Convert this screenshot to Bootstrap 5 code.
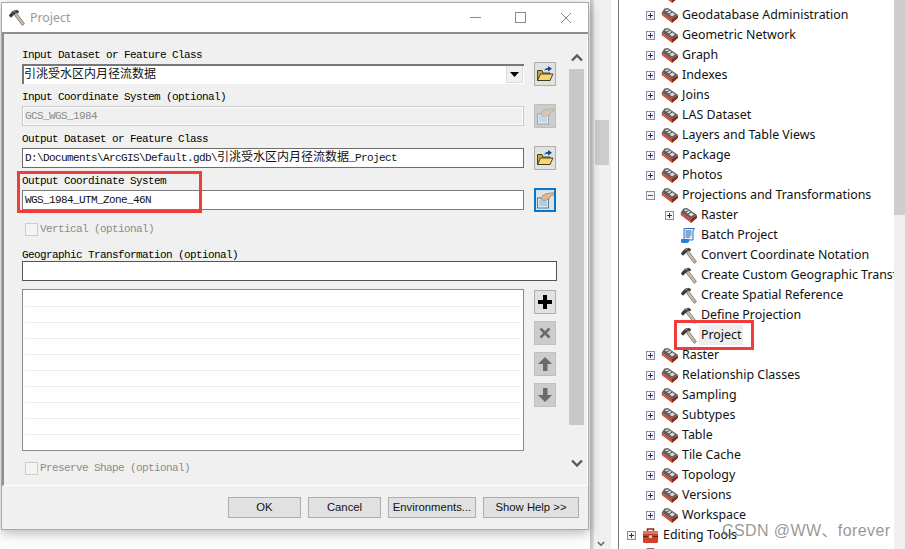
<!DOCTYPE html>
<html lang="zh">
<head>
<meta charset="utf-8">
<title>Project</title>
<link href="https://cdn.jsdelivr.net/npm/bootstrap@5.3.0/dist/css/bootstrap.min.css" rel="stylesheet">
<style>
html,body{margin:0;height:549px;overflow:hidden;background:#fff}
.stage{position:relative;width:905px;height:549px;overflow:hidden;background:#fff}
.dlg{position:absolute;left:1px;top:2px;width:588px;height:528px;background:#f0f0f0;border:1px solid #a9a9a9;box-shadow:0 3px 12px rgba(0,0,0,.3);z-index:2}
.ttl{height:31px;background:#fff;padding-left:6px;border-bottom:2px solid #8f8f8f;font:12.4px "Noto Sans",sans-serif;color:#9a9a9a}
.ttl-t{margin-left:5px}
.wbtns{margin-left:auto;width:118px;padding-right:16px}
.dlg-body{height:452px;border-left:2px solid #8f8f8f;border-right:1px solid #fff;border-bottom:1px solid #fff;padding:0 0 0 18px;position:relative}
.form-col{width:536px;padding-top:15px}
.lbl{font:11px/13px "Liberation Mono","Noto Sans CJK SC",monospace;letter-spacing:-.6px;color:#000;height:13px;white-space:nowrap}
.frow{height:42px}
.fld{width:502px;height:20px;margin-top:2px;background:#fff;font:11px/18px "Liberation Mono","Noto Sans CJK SC",monospace;letter-spacing:-.6px;padding-left:2px;border:1px solid #6c6c6c;white-space:nowrap;overflow:hidden;color:#111}
.cjk{font-family:"Noto Sans CJK SC",sans-serif;font-size:12px;letter-spacing:0;line-height:12px}
.fld-cmb{border:0;border-top:2px solid #777;border-left:2px solid #777;padding-left:0;position:relative;font-size:12px;letter-spacing:0;font-family:"Noto Sans CJK SC",sans-serif;line-height:14px}
.ddb{position:absolute;right:1px;top:0;width:17px;height:17px;background:#f0f0f0;border:1px solid #ddd;border-top:0;display:flex;align-items:center;justify-content:center}
.fld-dis{background:#f0f0f0;border:1px solid #c8c8c8;outline:1px solid #fff;outline-offset:-2px;color:#8a8a8a}
.fld-mid{border-color:#7a7a7a}
.ibtn{width:22px;height:24px;background:#e1e1e1;border:1px solid #adadad;margin-left:10px;display:flex;align-items:center;justify-content:center;flex:none}
.ibtn-off{background:#cccccc;border-color:#bfbfbf}
.ibtn-on{border:2px solid #0078d7}
.chkrow{height:14px;margin:5px 0 0 3px;font:11px/14px "Liberation Mono","Noto Sans CJK SC",monospace;letter-spacing:-.6px;color:#8c8c8c}
.chkrow-b{margin-top:10px}
.cbx{width:13px;height:13px;background:#f4f4f4;border:1px solid #ccc;margin-right:2px;flex:none}
.lbl-geo{margin-top:13px}
.fld-wide{width:535px;border-color:#555;margin-top:-1px;height:20px}
.lst-wrap{margin-top:8px}
.lst{width:502px;height:162px;background:#fff;border:1px solid #8a8a8a;padding:0 2px}
.lst-row{height:16px;border-bottom:1px solid #eee;}
.lst-row:first-child{height:17px}
.lst-row:last-child{border:0}
.sidebtns{margin-left:10px;margin-top:1px;gap:7px}
.sidebtns .ibtn{margin:0}
.vsb{position:absolute;left:565px;top:19px;width:15px;height:420px}
.vsb-tr{position:absolute;top:16px;left:0;width:15px;height:356px;background:#c8c8c8}
.vsb svg{position:absolute;left:2px}
.ftr{height:42px;padding:11px 0 0 226px;gap:7px}
.wbtn{height:21px;background:#e1e1e1;border:1px solid #adadad;font:11.3px/19px "Liberation Sans",sans-serif;color:#111;text-align:center;flex:none;padding:0}
.strip{position:absolute;left:590px;top:0;bottom:0;width:29px;background:#fff;border-right:1px solid #777;z-index:1}
.strip-l{position:absolute;left:0;top:0;bottom:0;width:4px;background:linear-gradient(90deg,#c2c2c2,#dcdcdc)}
.strip-m{position:absolute;left:4px;top:0;bottom:0;width:17px;background:#f0f0f0}
.strip-th{position:absolute;left:5px;top:120px;width:14px;height:45px;background:#cdcdcd}
.strip-dn{position:absolute;left:7px;top:541px}
.tree{position:absolute;left:619px;top:0;width:275px;height:549px;overflow:hidden;background:#fff;font:12.4px/20px "Noto Sans",sans-serif;color:#111}
.tree .tr:first-child{margin-top:-15px}
.tr{height:20px;white-space:nowrap;position:relative}
.lv0{padding-left:8px}.lv1{padding-left:27px}.lv2{padding-left:46px}
.ex{width:9px;height:9px;margin-right:6px;flex:none}
.ic{width:17px;height:17px;margin-right:4px;flex:none}
.hl{background:#eee;padding:0 2px;margin-left:-2px}
.tsb{position:absolute;left:894px;top:0;width:11px;height:549px;background:#f0f0f0}
.tsb-th{height:215px;background:#cdcdcd}
.redbox{position:absolute;border:3px solid #f23b3b;z-index:5;pointer-events:none}
.rb1{left:17px;top:171px;width:185px;height:42px}
.rb2{left:674px;top:320px;width:80px;height:30px}
.wm{position:absolute;left:722px;top:521px;font:16px/20px "Liberation Sans","Noto Sans CJK SC",sans-serif;letter-spacing:.4px;color:rgba(110,110,110,.72);z-index:6;white-space:nowrap}
</style>
</head>
<body>
<svg width="0" height="0" class="position-absolute">
<defs>
<symbol id="hm" viewBox="0 0 17 17">
<path d="M6.3 5.8 L8.5 4 L16.4 14.6 L14.4 16.4Z" fill="#cdbfa8" stroke="#6f6a5e" stroke-width=".8"/>
<path d="M.8 6.5 L4.5 2 L8 .8 L11 2 L10.5 4.2 L8 3.8 L4.5 7.2 L3 8.8 Z" fill="#3a3a3a"/>
<path d="M4.6 3.2 L8 1.8" stroke="#a5a5a5" stroke-width=".8"/>
</symbol>
<symbol id="ts" viewBox="0 0 17 17">
<path d="M.8 8 L11 15.8 L17 10.8 L17 8 L11 12 L.8 5.5Z" fill="#c23b26"/>
<path d="M.8 5.5 L3.5 1.5 L7 1 L17 8 L11 12Z" fill="#5e5e5e"/>
<path d="M3.8 3 L7 2.3 L14 7.6 L11 9.4Z" fill="#dedede"/>
<path d="M5.5 5 L8.5 3.4 M8 7 L11 5.2" stroke="#444" stroke-width="1"/>
<path d="M1.5 8.6 L10.8 15.6 L10.8 13.4 L1.5 6.6Z" fill="#d9583e"/>
<path d="M11 12 L11 16 L16.8 11 L16.8 8.4Z" fill="#8f2616"/>
</symbol>
<symbol id="tb" viewBox="0 0 17 17">
<path d="M5.5 4 V2 H11.5 V4" fill="none" stroke="#8a2a1c" stroke-width="1.5"/>
<rect x="1" y="4" width="15" height="12" rx="1.5" fill="#d3402c"/>
<rect x="1" y="4" width="15" height="3" fill="#e5725e"/>
<rect x="1" y="9" width="15" height="1.2" fill="#7e1f14"/>
<rect x="6.5" y="8" width="4" height="3.5" fill="#e8c9a0" stroke="#7e1f14" stroke-width=".5"/>
</symbol>
<symbol id="bp" viewBox="0 0 17 17">
<path d="M4 1.5 H14.5 Q13 3 13 5 V13 H4Z" fill="#e6f0fb" stroke="#2a6fc4"/>
<path d="M5.5 4 H11.5 M5.5 6 H11.5 M5.5 8 H11.5 M5.5 10 H10" stroke="#1f5fb5" stroke-width="1"/>
<path d="M1 12 H9 V14.6 Q9 16 7.5 16 H2.5 Q1 16 1 14.4Z" fill="#2a80dc"/>
</symbol>
<symbol id="fo" viewBox="0 0 18 18">
<path d="M1.5 5.5 V15.5 H14 V8 H7 L6 5.5Z" fill="#c9a53a" stroke="#3e3319" stroke-width=".9"/>
<path d="M1.5 15.5 L4.5 9 H17 L14 15.5Z" fill="#f5d675" stroke="#3e3319" stroke-width=".9"/>
<path d="M8 6 C9 3.5 10.5 3 12 3 V1 L16 3.8 L12 6.6 V4.8 C10.5 4.8 9.3 5 8 6Z" fill="#0c4a92"/>
</symbol>
<symbol id="hd" viewBox="0 0 18 18">
<rect x="1.5" y="7" width="11" height="10" fill="#dbe8f5" stroke="#4a5a6a" stroke-width=".8"/>
<path d="M3 10 H11 M3 12 H11 M3 14 H11" stroke="#7fb0dc" stroke-width="1"/>
<path d="M4.5 8 L7 4 L10.5 2.6 L17.5 1.6 V4.2 L14.5 5 L13.5 7.5 L11 8.5 L8 9.5Z" fill="#dcb98a" stroke="#8a7350" stroke-width=".5"/>
</symbol>
<symbol id="hdg" viewBox="0 0 18 18">
<rect x="1.5" y="7" width="11" height="10" fill="#dfe8ef" stroke="#8f9ba6" stroke-width=".8"/>
<path d="M3 10 H11 M3 12 H11 M3 14 H11" stroke="#adc8de" stroke-width="1"/>
<path d="M4.5 8 L7 4 L10.5 2.6 L17.5 1.6 V4.2 L14.5 5 L13.5 7.5 L11 8.5 L8 9.5Z" fill="#d5c8b5" stroke="#a9a090" stroke-width=".5"/>
</symbol>
<symbol id="px" viewBox="0 0 9 9"><rect x=".5" y=".5" width="8" height="8" fill="#f4f4f6" stroke="#8a8f9a"/><path d="M2 4.5H7M4.5 2V7" stroke="#25306a"/></symbol>
<symbol id="mx" viewBox="0 0 9 9"><rect x=".5" y=".5" width="8" height="8" fill="#f4f4f6" stroke="#8a8f9a"/><path d="M2 4.5H7" stroke="#555"/></symbol>
</defs>
</svg>
<div class="stage">

<div class="strip">
  <div class="strip-l"></div><div class="strip-m"></div><div class="strip-th"></div>
  <svg class="strip-dn" width="8" height="6" viewBox="0 0 8 6"><path d="M.8 1 L4 4.2 L7.2 1" fill="none" stroke="#666" stroke-width="1.6"/></svg>
</div>

<div class="tree" id="tree">
  <div class="tr lv1 d-flex align-items-center"><span class="ex"></span><svg class="ic"><use href="#ts"/></svg></div>
</div>
<div class="tsb"><div class="tsb-th"></div></div>

<div class="dlg">
  <div class="ttl d-flex align-items-center">
    <svg width="17" height="17"><use href="#hm"/></svg><span class="ttl-t">Project</span>
    <div class="wbtns d-flex justify-content-between align-items-center">
      <svg width="11" height="11" viewBox="0 0 11 11"><path d="M0 5.5H11" stroke="#8a8a8a"/></svg>
      <svg width="11" height="11" viewBox="0 0 11 11"><rect x=".5" y=".5" width="10" height="10" fill="none" stroke="#8a8a8a"/></svg>
      <svg width="12" height="12" viewBox="0 0 12 12"><path d="M1 1L11 11M11 1L1 11" stroke="#8a8a8a"/></svg>
    </div>
  </div>
  <div class="dlg-body">
    <div class="form-col">
      <div class="frow">
        <div class="lbl">Input Dataset or Feature Class</div>
        <div class="d-flex"><div class="fld fld-cmb">引洮受水区内月径流数据<span class="ddb"><svg width="9" height="5" viewBox="0 0 9 5"><path d="M0 0H9L4.5 5Z" fill="#000"/></svg></span></div><div class="ibtn"><svg width="18" height="18"><use href="#fo"/></svg></div></div>
      </div>
      <div class="frow">
        <div class="lbl">Input Coordinate System (optional)</div>
        <div class="d-flex"><div class="fld fld-dis">GCS_WGS_1984</div><div class="ibtn ibtn-off"><svg width="18" height="18"><use href="#hdg"/></svg></div></div>
      </div>
      <div class="frow">
        <div class="lbl">Output Dataset or Feature Class</div>
        <div class="d-flex"><div class="fld">D:\Documents\ArcGIS\Default.gdb\<span class="cjk">引洮受水区内月径流数据</span>_Project</div><div class="ibtn"><svg width="18" height="18"><use href="#fo"/></svg></div></div>
      </div>
      <div class="frow">
        <div class="lbl">Output Coordinate System</div>
        <div class="d-flex"><div class="fld fld-mid">WGS_1984_UTM_Zone_46N</div><div class="ibtn ibtn-on"><svg width="18" height="18"><use href="#hd"/></svg></div></div>
      </div>
      <div class="chkrow d-flex align-items-center"><span class="cbx"></span>Vertical (optional)</div>
      <div class="lbl lbl-geo">Geographic Transformation (optional)</div>
      <div class="fld fld-wide"></div>
      <div class="d-flex lst-wrap">
        <div class="lst">
          <div class="lst-row"></div><div class="lst-row"></div><div class="lst-row"></div><div class="lst-row"></div><div class="lst-row"></div><div class="lst-row"></div><div class="lst-row"></div><div class="lst-row"></div><div class="lst-row"></div><div class="lst-row"></div>
        </div>
        <div class="sidebtns d-flex flex-column">
          <div class="ibtn"><svg width="16" height="16" viewBox="0 0 16 16"><path d="M6 1H10V6H15V10H10V15H6V10H1V6H6Z" fill="#000"/></svg></div>
          <div class="ibtn ibtn-off"><svg width="14" height="14" viewBox="0 0 14 14"><path d="M2.5 2.5L11.5 11.5M11.5 2.5L2.5 11.5" stroke="#6a6a6a" stroke-width="2.6"/></svg></div>
          <div class="ibtn ibtn-off"><svg width="16" height="16" viewBox="0 0 16 16"><path d="M8 1L15 8H10.5V15H6V8H1Z" fill="#6a6a6a"/></svg></div>
          <div class="ibtn ibtn-off"><svg width="16" height="16" viewBox="0 0 16 16"><path d="M6 1H10.5V8H15L8 15L1 8H6Z" fill="#6a6a6a"/></svg></div>
        </div>
      </div>
      <div class="chkrow chkrow-b d-flex align-items-center"><span class="cbx"></span>Preserve Shape (optional)</div>
    </div>
    <div class="vsb">
      <svg style="top:0" width="12" height="9" viewBox="0 0 12 9"><path d="M1 7.5L6 2.5L11 7.5" fill="none" stroke="#5a5a5a" stroke-width="2.4"/></svg>
      <div class="vsb-tr"></div>
      <svg style="top:406px" width="12" height="9" viewBox="0 0 12 9"><path d="M1 1.5L6 6.5L11 1.5" fill="none" stroke="#5a5a5a" stroke-width="2.4"/></svg>
    </div>
  </div>
  <div class="ftr d-flex">
    <button class="wbtn" style="width:73px">OK</button>
    <button class="wbtn" style="width:73px">Cancel</button>
    <button class="wbtn" style="width:88px">Environments...</button>
    <button class="wbtn" style="width:96px">Show Help &gt;&gt;</button>
  </div>
</div>

<div class="redbox rb1"></div>
<div class="redbox rb2"></div>
<div class="wm">CSDN @WW、forever</div>
</div>
<script>
var rows=[[1,'Geodatabase Administration','p','ts'],[1,'Geometric Network','p','ts'],[1,'Graph','p','ts'],[1,'Indexes','p','ts'],[1,'Joins','p','ts'],[1,'LAS Dataset','p','ts'],[1,'Layers and Table Views','p','ts'],[1,'Package','p','ts'],[1,'Photos','p','ts'],[1,'Projections and Transformations','m','ts'],[2,'Raster','p','ts'],[2,'Batch Project','','bp'],[2,'Convert Coordinate Notation','','hm'],[2,'Create Custom Geographic Transformation','','hm'],[2,'Create Spatial Reference','','hm'],[2,'Define Projection','','hm'],[2,'Project','','hm',1],[1,'Raster','p','ts'],[1,'Relationship Classes','p','ts'],[1,'Sampling','p','ts'],[1,'Subtypes','p','ts'],[1,'Table','p','ts'],[1,'Tile Cache','p','ts'],[1,'Topology','p','ts'],[1,'Versions','p','ts'],[1,'Workspace','p','ts'],[0,'Editing Tools','p','tb'],[0,'','','tb']];
var h='';
rows.forEach(function(r){
 h+='<div class="tr lv'+r[0]+' d-flex align-items-center">'+
 '<span class="ex">'+(r[2]?'<svg width="9" height="9" class="d-block"><use href="#'+(r[2]=='p'?'px':'mx')+'"/></svg>':'')+'</span>'+
 '<svg class="ic"><use href="#'+r[3]+'"/></svg>'+(r[1]?'<span'+(r[4]?' class="hl"':'')+'>'+r[1]+'</span>':'')+'</div>';
});
document.getElementById('tree').insertAdjacentHTML('beforeend',h);
</script>
<script src="https://cdn.jsdelivr.net/npm/bootstrap@5.3.0/dist/js/bootstrap.bundle.min.js"></script>
</body>
</html>
